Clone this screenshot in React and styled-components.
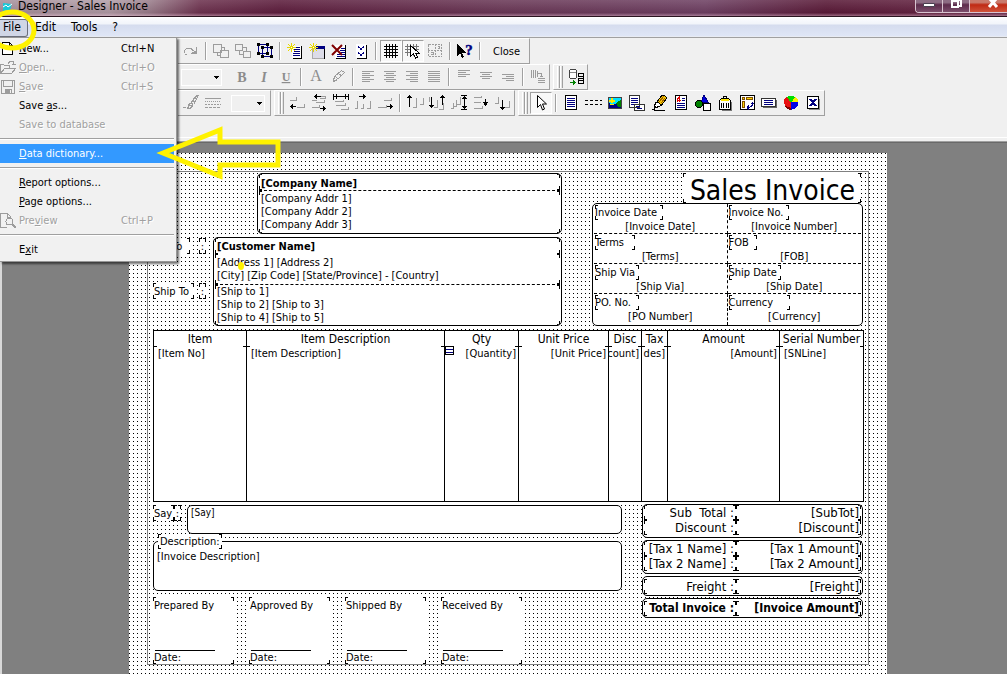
import React, { useState } from 'react';
import styled, { createGlobalStyle, css } from 'styled-components';

const GlobalStyle = createGlobalStyle`
  * { box-sizing: border-box; }
  body {
    margin: 0;
    background: #808080;
    color: #000;
    font: 11px/13px 'DejaVu Sans Condensed', 'DejaVu Sans', Tahoma, sans-serif;
  }
`;

/* ---------- window ---------- */

const Window = styled.div`
  position: relative;
  display: flex;
  flex-direction: column;
  height: 100vh;
  overflow: hidden;
`;

const TitleBar = styled.header`
  display: flex;
  align-items: flex-start;
  justify-content: space-between;
  height: 17px;
  flex: none;
  padding-left: 3px;
  border-bottom: 1px solid #2a1420;
  background:
    linear-gradient(to bottom, rgba(255, 255, 255, 0.12), rgba(40, 0, 20, 0.1) 80%, rgba(220, 180, 200, 0.5)),
    linear-gradient(to right, #a8929d 0, #b3a0a9 110px, #9b7f8c 150px, #6e3450 200px, #5e1f3e 280px, #6b3a58 50%, #6f4264 70%, #5a1b38 82%, #6a2a48 100%);
`;

const TitleText = styled.h1`
  display: flex;
  align-items: center;
  gap: 4px;
  margin: 0;
  height: 13px;
  font-size: 12px;
  font-weight: normal;
  white-space: pre;
`;

const WindowButtons = styled.div`
  display: flex;
  height: 13px;
  border: 1px solid #d8c4d0;
  border-top: 0;
  border-right: 0;
  border-radius: 0 0 0 4px;
  overflow: hidden;
`;

const WindowButton = styled.button`
  display: flex;
  align-items: flex-start;
  justify-content: center;
  width: ${props => (props.$close ? 37 : 27)}px;
  padding: 0;
  padding-left: ${props => (props.$close ? 9 : 0)}px;
  border: 0;
  border-right: ${props => (props.$close ? 0 : 1)}px solid #d8c4d0;
  background: ${props => (props.$close
    ? 'linear-gradient(#c97a6c 0 20%, #c02a14 40%, #d0543c)'
    : 'linear-gradient(#8d6d84 0 20%, #5d2c4c 40%, #7c4f6c)')};
`;

const MenuBar = styled.nav`
  display: flex;
  align-items: center;
  flex: none;
  height: 21px;
  border-top: 1px solid #fff;
  border-bottom: 1px solid #a0a0a0;
  background: linear-gradient(#fbfcfe 0, #f1f4fa 6px, #d5dcee 7px, #dfe6f6 18px, #f0f0f0 19px);
`;

const MenuTitle = styled.button`
  height: 18px;
  padding: ${props => (props.$open ? '0 6px 0 3px' : '0 7px')};
  border: 1px solid ${props => (props.$open ? '#6b6f7c' : 'transparent')};
  border-left: 0;
  border-radius: 0 3px 3px 0;
  background: ${props => (props.$open ? '#d0d6e6' : 'transparent')};
  font: inherit;
  font-size: 12px;
`;

const Popup = styled.div`
  position: absolute;
  top: 37px;
  left: 0;
  z-index: 2;
  width: 177px;
  padding: 1px 2px 2px 0;
  border: 1px solid #979797;
  border-left: 0;
  background: #f1f1f1;
  box-shadow: 2px 2px 2px rgba(0, 0, 0, 0.55);
`;

const MenuItem = styled.button`
  display: grid;
  grid-template-columns: 19px 1fr 53px;
  align-items: center;
  width: 100%;
  height: 19px;
  padding: 0;
  border: 0;
  background: ${props => (props.$active ? '#3399ff' : 'transparent')};
  color: ${props => (props.$active ? '#fff' : '#000')};
  font: inherit;
  text-align: left;
  white-space: nowrap;

  &:disabled {
    color: #a0a0a0;
    text-shadow: 1px 1px #fff;
  }

  u { text-underline-offset: 1px; }
`;

const MenuRule = styled.hr`
  margin: 4px 0;
  border: 0;
  border-top: 1px solid #a0a0a0;
  border-bottom: 1px solid #fff;
`;

/* ---------- toolbars ---------- */

const Dock = styled.div`
  flex: none;
  height: 105px;
  padding-left: 178px;
  border-bottom: 1px solid #696969;
  background: linear-gradient(#f0f0f0 0 99px, #fff 99px 100px, #f0f0f0 100px 103px, #a0a0a0 103px);
`;

const DockRow = styled.div`
  display: flex;
  gap: ${props => props.$gap || 0}px;
`;

const Bar = styled.div`
  display: flex;
  align-items: center;
  height: 26px;
  padding: 0 0 0 2px;
  border-top: 1px solid #fff;
  border-right: 1px solid #a0a0a0;
  border-bottom: 1px solid #a0a0a0;
  ${props => props.$grip && css`
    padding-left: 0;
    border-left: 1px solid #fff;
    &::before {
      content: '';
      width: 7px;
      height: 22px;
      margin: 0 1px 0 3px;
      background: linear-gradient(to right, #fff 0 1px, #e4e4e4 1px 2px, #a0a0a0 2px 3px, #fff 3px 4px, #e4e4e4 4px 5px, #a0a0a0 5px 6px, transparent 6px);
    }
  `}
`;

const ToolButton = styled.button`
  display: flex;
  align-items: center;
  justify-content: center;
  width: ${props => (props.$wide ? 45 : 22)}px;
  height: 22px;
  padding: 0;
  border: 1px solid transparent;
  background: none;
  font: 11px 'DejaVu Sans Condensed', Tahoma, sans-serif;
  ${props => props.$pressed && css`
    border-color: #a0a0a0 #fff #fff #a0a0a0;
    background: #f8f8f8;
  `}
`;

const Divider = styled.span`
  width: 8px;
  height: 18px;
  background: linear-gradient(to right, transparent 3px, #a0a0a0 3px 4px, #fff 4px 5px, transparent 5px);
`;

const Combo = styled.select`
  appearance: none;
  width: ${props => props.$width}px;
  height: 17px;
  margin: ${props => props.$margin};
  border: 1px solid #fff;
  border-radius: 0;
  background:
    linear-gradient(#000, #000) right 2px top 6px / 5px 1px no-repeat,
    linear-gradient(#000, #000) right 3px top 7px / 3px 1px no-repeat,
    linear-gradient(#000, #000) right 4px top 8px / 1px 1px no-repeat,
    #f0f0f0;
`;

const Glyph = styled.svg`
  display: block;
  fill: none;
  shape-rendering: crispEdges;
`;

const GREY = '#9c9c9c';
const NAVY = '#000080';

function Icon({ children, color = GREY }) {
  return (
    <Glyph width={18} height={18} viewBox="0 0 18 18" stroke={color} aria-hidden="true">
      {children}
    </Glyph>
  );
}

// horizontal strokes given as [x, y, length]
const rows = list => list.map(([x, y, w]) => `M${x} ${y + 0.5}h${w}`).join('');

const lines = list => <Icon><path d={rows(list)} /></Icon>;

const letter = (ch, extra) => (
  <Icon>
    <text x="9" y="14" textAnchor="middle" stroke="none" fill="#8c8c8c" fontFamily="Liberation Serif, serif" fontWeight="bold" fontSize="14" {...extra}>{ch}</text>
  </Icon>
);

const pageShape = <path d="M3.500 1.500h11v14h-11z" fill="#fff" stroke="#000" />;

const sparkle = (
  <>
    <path d="M5.500 1v9M1 5.500h9M2 2l7 7M9 2l-7 7" stroke="#e8d800" />
    <path d="M5 5h1v1h-1z" fill="#fff" stroke="none" />
  </>
);

const icons = {
  redo: <Icon><path d="M2.500 11v-2l2-3h4l3 3M14.500 5v6h-6M12 9.500h2M10 10.500h4M3 12.500h2" /></Icon>,
  front: <Icon><path d="M1.500 2.500h8v8h-8zM8.500 8.500h8v7h-8zM10 5.500h2.500v3M5.500 11v2.500h3" /></Icon>,
  back: <Icon><path d="M1.500 2.500h7v6h-7zM9.500 9.500h7v6h-7zM9 5.500h3.500v4M5.500 9v3.500h4" /></Icon>,
  group: (
    <Icon color={NAVY}>
      <path d="M2.500 2.500h9v9h-9zM6.500 5.500h9v9h-9z" />
      <path d="M1 1h3v3h-3zM10 1h3v3h-3zM1 10h3v3h-3zM5 4h3v3h-3zM14 4h3v3h-3zM5 13h3v3h-3zM14 13h3v3h-3zM10 10h3v3h-3z" fill="#000" stroke="none" />
    </Icon>
  ),
  newBand: (
    <Icon color={NAVY}>
      <path d="M6 4h9v12h-9z" fill="#fff" stroke="none" />
      <path d="M15.500 4v12.500h-9" stroke="#000" />
      <path d={rows([[8, 5, 6], [8, 7, 6], [8, 9, 6], [7, 11, 7], [7, 13, 7]])} />
      {sparkle}
    </Icon>
  ),
  newPage: (
    <Icon color="#000">
      <path d="M4.500 5.500h12v11h-12z" fill="#dcdce8" stroke="#aaa" />
      <path d="M16.500 5v12" />
      <path d="M8 4h9v3h-9z" fill={NAVY} stroke="none" />
      {sparkle}
    </Icon>
  ),
  remove: (
    <Icon color={NAVY}>
      <path d="M5 3h10v13h-10z" fill="#fff" stroke="none" />
      <path d="M15.500 3v13.500h-10" stroke="#000" />
      <path d={rows([[11, 6, 4], [10, 8, 5], [11, 10, 4], [7, 12, 8], [7, 14, 8]])} />
      <path d="M2 3l10 10M12 3l-10 10" stroke="#800000" strokeWidth="2" shapeRendering="auto" />
    </Icon>
  ),
  order: (
    <Icon color={NAVY}>
      <path d="M4 2h10v14h-10z" fill="#fff" stroke="none" />
      <path d="M14.500 3v13.500h-10" stroke="#000" />
      <path d="M6 4.500h1M7 5.500h1M8 6.500h2M10 5.500h1M11 4.500h1M6 10.500h1M7 11.500h1M8 12.500h2M10 11.500h1M11 10.500h1" />
      <path d="M6 5.500h1M11 5.500h1M8 7.500h2M6 11.500h1M11 11.500h1M8 13.500h2" />
    </Icon>
  ),
  grid: <Icon color="#000"><path d="M2 4.500h14M2 7.500h14M2 10.500h14M2 13.500h14M4.500 2v14M7.500 2v14M10.500 2v14M13.500 2v14" /></Icon>,
  snap: (
    <Icon color="#777">
      <path d="M1 4.500h14M1 7.500h14M1 10.500h14M3.500 2v12M6.500 2v12M9.500 2v12M12.500 2v12" />
      <path d="M6.500 3.500v11l3-2.500 2 4 2-1-2-4h3.500z" fill="#fff" stroke="#000" />
    </Icon>
  ),
  guides: (
    <Icon>
      <path d="M2.500 2.500h13v12h-13zM9.500 2v13M2 8.500h14" strokeDasharray="2 1" />
      <path d="M4.500 10.500h3v2h-3M11.500 4.500h2v2h-2" />
    </Icon>
  ),
  help: (
    <Icon color="#000">
      <path d="M1 2v12l3-3 2 5 2-1-2-4h4z" fill="#000" stroke="none" />
      <text x="13" y="13" textAnchor="middle" stroke={NAVY} strokeWidth="0.500" fill={NAVY} fontFamily="Liberation Serif, serif" fontWeight="bold" fontSize="15">?</text>
    </Icon>
  ),
  bold: letter('B'),
  italic: letter('I', { fontStyle: 'italic' }),
  underline: letter('U', { textDecoration: 'underline', y: 13, fontSize: 12 }),
  fontColor: letter('A', { y: 13, fontSize: 16, fontWeight: 'normal' }),
  marker: <Icon><path d="M4.500 12.500l1-4 7-6 3 2-7 7-4 2zM6 8l3 3M10 6l3 2" /></Icon>,
  left: lines([[3, 3, 12], [3, 5, 8], [3, 7, 12], [3, 9, 8], [3, 11, 12], [3, 13, 8]]),
  center: lines([[3, 3, 12], [5, 5, 8], [3, 7, 12], [5, 9, 8], [3, 11, 12], [5, 13, 8]]),
  right: lines([[3, 3, 12], [7, 5, 8], [3, 7, 12], [7, 9, 8], [3, 11, 12], [7, 13, 8]]),
  justify: lines([[3, 3, 12], [3, 5, 12], [3, 7, 12], [3, 9, 12], [3, 11, 12], [3, 13, 12]]),
  top: lines([[3, 2, 12], [3, 4, 8], [3, 6, 12], [3, 8, 8]]),
  middle: lines([[3, 4, 12], [5, 6, 8], [3, 8, 12], [5, 10, 8]]),
  bottom: lines([[3, 6, 12], [7, 8, 8], [3, 10, 12], [7, 12, 8]]),
  rotate: <Icon><path d="M2.500 2v8M4.500 2v8M6.500 2v8M8.500 3v6M9 5.500h3v3M9 10.500h7M9 12.500h7M9 14.500h7M11 8.500h3" /></Icon>,
  brush: <Icon><path d="M1 13.500h3M5.500 14.500l2-5h3v3l-3 2zM9 9l5-7h2l-4 8M7 11.500h3M10 7.500h3M12 4.500h2" strokeWidth="1.300" /></Icon>,
  frames: <Icon><path d="M1 4.500h16" /><path d="M1 7.500h16" strokeDasharray="1 1" /><path d="M1 10.500h16" strokeDasharray="2 1" /><path d="M1 13.500h16" strokeDasharray="3 1" /></Icon>,
  alignLeft: <Icon><path d="M2 6.500h6v-4M9 13.500h7v-4" /><path d="M2 12.500h6M4.500 10v5M3.500 11v3" stroke="#000" /></Icon>,
  alignMid: <Icon><path d="M2 6.500h5M11 2.500h4v2h-5M6 8.500h8v-3M2 13.500h7v-3" /><path d="M4 2.500h7M6.500 0v5M5.500 1v3M10 14.500h6M13.500 12v5M14.500 13v3" stroke="#000" /></Icon>,
  alignWide: <Icon><path d="M3 7.500h8v-2M4 11.500h9v-3M9 15.500h7v-3" /><path d="M1.500 0v6M16.500 0v6M2 2.500h14M4.500 0v5M13.500 0v5" stroke="#000" /></Icon>,
  spaceH: <Icon><path d="M1 14.500h2.500v-8M7 14.500h2.500v-5M13 14.500h3.500v-8" /><path d="M5 2.500h7M9.500 0v5M10.500 1v3" stroke="#000" /></Icon>,
  alignRight: <Icon><path d="M8 6.500h7v-3M2 13.500h8v-3" /><path d="M11 12.500h6M14.500 10v5M15.500 11v3" stroke="#000" /></Icon>,
  alignTop: <Icon><path d="M7 13.500h3.500v-10M14 10.500h3v-7" /><path d="M3.500 1v12M1 3.500h5M2 2.500h3" stroke="#000" /></Icon>,
  alignVMid: <Icon><path d="M6 13.500h3.500v-8M11 15.500h4v-7M1 3v5" /><path d="M3.500 3v11M1 11.500h5M2 12.500h3M14.500 1v10M12 3.500h5M13 2.500h3" stroke="#000" /></Icon>,
  alignTall: <Icon><path d="M1 14.500h2.500v-6M4 12.500h2.500v-7M7 10.500h3v-8" /><path d="M11 1.500h6M11 15.500h6M14.500 2v13M12 4.500h5M13 3.500h3M12 12.500h5M13 13.500h3" stroke="#000" /></Icon>,
  spaceV: <Icon><path d="M2 3.500h7v-2M2 8.500h7M2 14.500h8v-3" /><path d="M13.500 5v7M11 8.500h5M12 9.500h3M12 10.500h3" stroke="#000" /></Icon>,
  alignBottom: <Icon><path d="M1 9.500h3.500v-7M11 13.500h4v-7" /><path d="M8.500 6v10M6 13.500h5M7 14.500h3" stroke="#000" /></Icon>,
  fields: (
    <Icon color="#000">
      <path d="M2.500 2.500l1-1h5l1 1v7l-1 1h-5l-1-1z" fill="#fff" stroke="#444" />
      <path d="M3 4.500h6" stroke="#888" />
      <path d="M11 5.500h6M11 8.500h6M11 10.500h6M11 12.500h6M11 15.500h6M16.500 5v11M11.500 5v4M11.500 10v2M11.500 13v3" />
      <path d="M3 14.500h6M6.500 12v5M7.500 13v3" stroke="#008000" />
    </Icon>
  ),
  pointer: <Icon><path d="M5.500 1.500v12l3-3 2 5.500 2-1-2-5h4z" fill="#fff" stroke="#000" shapeRendering="auto" /></Icon>,
  memo: <Icon color={NAVY}>{pageShape}<path d={rows([[5, 4, 8], [5, 6, 8], [5, 8, 8], [5, 10, 8], [5, 12, 8]])} /></Icon>,
  band: <Icon color="#000"><path d="M1 6.500h17M1 10.500h17" strokeDasharray="3 2" /></Icon>,
  picture: (
    <Icon color="#444">
      <path d="M3 4h12v10h-12z" fill="#00e4ff" stroke="none" />
      <path d="M3 9l4 2 4-2 4-2v7h-12z" fill={NAVY} stroke="none" />
      <path d="M10 9l5-3v7h-3z" fill="#008000" stroke="none" />
      <path d="M5 4h2v2h2v2h-2v1h-2v-1h-2v-2h2zM4 10h4v1h-4z" fill="#ffe800" stroke="none" />
      <path d="M2.500 3.500h13v11h-13z" />
    </Icon>
  ),
  subreport: (
    <Icon color={NAVY}>
      <path d="M1.500 1.500h10v12h-10zM6.500 10.500h10v6h-10z" fill="#fff" stroke="#333" />
      <path d={rows([[3, 4, 7], [3, 6, 7], [3, 8, 7], [3, 10, 3], [8, 12, 4], [9, 14, 5]])} />
    </Icon>
  ),
  pen: (
    <Icon color="#000">
      <path d="M7 8l5-7h2l2 2v2l-5 7z" fill="#f8c800" />
      <path d="M4 13l2-5h2l2 2v2l-5 2z" fill="#fff" />
      <path d="M2 15.500h2l2-3M4 16.500h11" />
      <path d="M9 8l5-6M11 9l4-5" stroke="#a06000" />
    </Icon>
  ),
  rich: (
    <Icon color={NAVY}>
      {pageShape}
      <path d={rows([[10, 4, 3], [10, 6, 3], [5, 9, 8], [5, 11, 8], [5, 13, 8]])} />
      <path d="M5.500 8v-3l2-2v5M5 6.500h4" stroke="#e00000" strokeWidth="1.300" />
    </Icon>
  ),
  shape: (
    <Icon color="#000">
      <path d="M10 1l4 7h-7z" fill="#0000e0" stroke={NAVY} />
      <circle cx="5" cy="10" r="3.500" fill="#008000" />
      <path d="M9.500 9.500h7v7h-7z" fill="#fff" />
    </Icon>
  ),
  barcode: (
    <Icon color="#000">
      <path d="M15.500 8v8.500h-10" stroke="#777" />
      <path d="M3.500 6.500l2-2h7l2 2v9h-11z" fill="#fff" />
      <path d="M5 5h8v2h-8z" fill="#ffe800" stroke="none" />
      <path d="M7.500 4v-2h3v2M5.500 9v5M7.500 9v5M10.500 9v5M12.500 9v5" />
    </Icon>
  ),
  cross: (
    <Icon color={NAVY}>
      <path d="M2.500 1.500h14v14h-14z" fill="#fff" stroke="#000" />
      <path d="M4.500 3.500h2v2h-2zM8.500 3.500h6v2h-6zM4.500 7.500h2v6h-2z" fill="#ffd800" stroke="#805000" />
      <path d="M9 13.500h3M14.500 8v3l-2 2M13 9.500h3M9.500 12v3M10.500 11v5" />
    </Icon>
  ),
  check: (
    <Icon color={NAVY}>
      <path d="M3 6h14v8h-14z" fill="#666" stroke="none" />
      <path d="M1.500 4.500h14v8h-14z" fill="#fff" stroke="#333" />
      <path d={rows([[4, 6, 9], [4, 8, 9], [4, 10, 9]])} />
    </Icon>
  ),
  chart: (
    <Icon color="none">
      <path d="M9 9L5 3Q2 4 2 8q0 5 7 8z" fill="#e81010" />
      <path d="M9 9L5 3q4-3 8 0z" fill="#00e000" />
      <path d="M9 9l4-6q3 1 3 5z" fill="#fff000" />
      <path d="M9 8h7q1 6-7 8z" fill="#0000e8" />
      <path d="M3 12q2 4 6 4v-2z" fill="#800000" />
    </Icon>
  ),
  ole: (
    <Icon color={NAVY}>
      <path d="M5 5h11v11h-11z" fill="#888" stroke="none" />
      <path d="M3.500 2.500h11v12h-11z" fill="#fff" stroke="#000" />
      <path d="M6 5l6 7M12 5l-6 7" strokeWidth="2" />
      <path d="M5 5.500h3M10 5.500h3M5 11.500h3M10 11.500h3" />
    </Icon>
  ),
};

function Tools({ names, pressed = [] }) {
  return names.map((name, i) => (name === '|'
    ? <Divider key={i} />
    : <ToolButton key={name} title={name} $pressed={pressed.includes(name)}>{icons[name]}</ToolButton>));
}

/* ---------- report sheet ---------- */

const corner = (x, y) => `
  linear-gradient(#000, #000) ${x} ${y} / 3px 1px no-repeat,
  linear-gradient(#000, #000) ${x} ${y} / 1px 4px no-repeat`;

const corners = css`
  background:
    ${corner('left', 'top')},
    ${corner('right', 'top')},
    ${corner('left', 'bottom')},
    ${corner('right', 'bottom')},
    #fff;
`;

const Workspace = styled.main`
  display: flex;
  flex: 1;
  min-height: 0;
  overflow: hidden;
  padding: 10px 120px 0 127px;
  border-left: 2px solid #d8d8d8;
  background: #808080;
`;

const Sheet = styled.section`
  flex: 1;
  height: max-content;
  padding: 18px;
  background: conic-gradient(from 90deg at 3px 3px, #000 25%, #fff 0) 1px 1px / 4px 4px;
`;

const Margins = styled.div`
  padding: 1px 4px 0 5px;
  border: 1px solid #808080;
`;

const Columns = styled.div`
  display: grid;
  grid-template-columns: ${props => props.$columns};
  column-gap: ${props => props.$gap}px;
  align-items: start;
  padding-right: 1px;
`;

const Stack = styled.div`
  display: flex;
  flex-direction: column;
  gap: ${props => props.$gap || 0}px;
`;

const Box = styled.div`
  padding: 0 1px;
  border: 1px solid #000;
  border-radius: 5px;
  background: #fff;
  overflow: hidden;
`;

const CompanyBox = styled(Box)`
  margin-left: 104px;
`;

const Memo = styled.div`
  ${corners}
  padding: ${props => props.$pad || '1px 2px'};
  font-weight: ${props => (props.$bold ? 'bold' : 'normal')};
  font-size: ${props => props.$size || 11}px;
  line-height: ${props => props.$line || 13}px;
  text-align: ${props => props.$align || 'left'};
  min-height: ${props => props.$height || 0}px;
  width: ${props => (props.$width ? `${props.$width}px` : 'auto')};
  border-bottom: ${props => (props.$ruled ? '1px dashed #000' : 0)};
  white-space: pre-wrap;
`;

const Party = styled.div`
  display: grid;
  grid-template-columns: 46px 14px 1fr;
`;

const PartyLabels = styled.div`
  display: grid;
  align-content: start;
  row-gap: 29px;
  padding-top: 1px;
`;

const Heading = styled.h2`
  ${corners}
  align-self: flex-end;
  margin: 0 2px 0 0;
  padding: 3px 6px 0 7px;
  height: 30px;
  font-size: 28px;
  font-weight: normal;
  line-height: 29px;
  white-space: nowrap;
`;

const InfoGrid = styled(Box)`
  display: grid;
  grid-template-columns: 1fr 1fr;
`;

const InfoCell = styled.div`
  height: ${props => (props.$last ? 31 : 30)}px;
  padding: 1px 1px 0;
  border-bottom: ${props => (props.$last ? 0 : '1px dashed #000')};
  border-right: ${props => (props.$edge ? 0 : '1px dashed #000')};
  text-align: center;
`;

const ItemTable = styled.table`
  width: 100%;
  margin-top: 4px;
  border-collapse: collapse;
  table-layout: fixed;
  background: #fff;

  th, td {
    padding: 0;
    border: solid #000;
    border-width: 0 1px;
  }
  th {
    height: 15px;
    padding-top: 2px;
    border-top-width: 1px;
    font-size: 12px;
    font-weight: normal;
    line-height: 13px;
    white-space: nowrap;
  }
  td {
    height: 155px;
    border-bottom-width: 1px;
    vertical-align: top;
  }
`;

const CellText = styled.div`
  position: relative;
  display: flex;
  justify-content: ${props => (props.$right ? 'flex-end' : 'flex-start')};
  height: 20px;
  padding: ${props => (props.$right ? '1px 2px 0 0' : '1px 0 0 4px')};
  overflow: hidden;
  white-space: nowrap;
  background:
    linear-gradient(#000, #000) left top / 3px 1px no-repeat,
    linear-gradient(#000, #000) right top / 3px 1px no-repeat;
`;

const LinkMark = styled.i`
  position: absolute;
  left: 0;
  top: 0;
  width: 9px;
  height: 9px;
  border: 1px solid #000;
  background: linear-gradient(#fff 2px, #000080 2px 3px, #fff 3px 5px, #000080 5px 6px, #fff 6px);
`;

const FooterColumns = styled(Columns)`
  margin-top: 2px;
`;

const FooterLeft = styled(Stack)`
  padding-top: 1px;
`;

const SayRow = styled.div`
  display: flex;
  align-items: flex-start;
`;

const SayBox = styled(Box)`
  flex: 1;
  height: 29px;
  margin-left: 6px;
  padding: 0 3px;
  font-size: 10px;
`;

const Description = styled.fieldset`
  min-width: 0;
  height: 57px;
  margin: 0;
  padding: 0;
  border: 1px solid #000;
  border-radius: 5px;
  background: #fff;

  legend {
    ${corners}
    margin-left: 4px;
    padding: 1px 2px;
  }
  p { margin: 1px 3px; }
`;

const Signatures = styled.div`
  display: grid;
  grid-template-columns: repeat(4, 81px);
  column-gap: 15px;
  margin-top: 6px;
`;

const Signature = styled.div`
  ${corners}
  display: flex;
  flex-direction: column;
  justify-content: space-between;
  height: 67px;
  padding: 2px 1px 0;

  span:last-child {
    padding-top: 1px;
    background: linear-gradient(#000, #000) 1px 0 / 60px 1px no-repeat;
  }
`;

const TotalBox = styled(Box)`
  display: grid;
  grid-template-columns: 92px 1fr;
  padding: ${props => (props.$single ? 2 : 0)}px 1px ${props => (props.$single ? 1 : 2)}px;
`;

const Annotation = styled.svg`
  position: absolute;
  inset: 0;
  z-index: 3;
  width: 290px;
  height: 280px;
  pointer-events: none;
  fill: none;
  stroke: #fff200;
`;

/* ---------- data ---------- */

const menu = [
  { icon: 'new', label: ['', 'N', 'ew...'], keys: 'Ctrl+N' },
  { icon: 'open', label: ['', 'O', 'pen...'], keys: 'Ctrl+O', disabled: true },
  { icon: 'save', label: ['', 'S', 'ave'], keys: 'Ctrl+S', disabled: true },
  { label: ['Save ', 'a', 's...'] },
  { label: ['Save to database', '', ''], disabled: true },
  null,
  { label: ['', 'D', 'ata dictionary...'] },
  null,
  { label: ['', 'R', 'eport options...'] },
  { label: ['', 'P', 'age options...'] },
  { icon: 'preview', label: ['Pre', 'v', 'iew'], keys: 'Ctrl+P', disabled: true },
  null,
  { label: ['E', 'x', 'it'] },
];

const menuIcons = {
  new: <Icon color="#000"><path d="M2.500 2.500h7l3 3v9h-10zM9.500 2.500v3h3" fill="#fff" /></Icon>,
  open: <Icon><path d="M.500 14.500v-9h3l1 1h5v3M.500 14.500l4-5h11l-4 5zM8 4.500l2-2h3l1 3M12 5.500h4" /></Icon>,
  save: <Icon><path d="M1.500 2.500h13v13h-13zM3.500 3v5h9v-5M5 11h6v4h-6z" /><path d="M5 11h4v4h-4z" fill={GREY} /></Icon>,
  preview: <Icon><path d="M7 15.500h-6.500v-14h7l3 3v2M7.500 2v3h3" /><circle cx="9.500" cy="9.500" r="3.500" /><path d="M12 12l4 4" strokeWidth="2" /></Icon>,
};

const info = [
  ['Invoice Date', '[Invoice Date]', 68], ['Invoice No.', '[Invoice Number]', 60],
  ['Terms', '[Terms]', 40], ['FOB', '[FOB]', 28],
  ['Ship Via', '[Ship Via]', 44], ['Ship Date', '[Ship Date]', 52],
  ['PO. No.', '[PO Number]', 44], ['Currency', '[Currency]', 61],
];

const items = [
  { title: 'Item', field: '[Item No]', size: 93 },
  { title: 'Item Description', field: '[Item Description]', size: 198 },
  { title: 'Qty', field: '[Quantity]', size: 74, right: true, mark: true },
  { title: 'Unit Price', field: '[Unit Price]', size: 90, right: true },
  { title: 'Disc', field: 'count]', size: 33, right: true },
  { title: 'Tax', field: 'des]', size: 26, right: true },
  { title: 'Amount', field: '[Amount]', size: 112, right: true },
  { title: 'Serial Number', field: '[SNLine]', size: 84 },
];

const totals = [
  [['Sub  Total :', '[SubTot]'], ['Discount :', '[Discount]']],
  [['[Tax 1 Name] :', '[Tax 1 Amount]'], ['[Tax 2 Name] :', '[Tax 2 Amount]']],
  [['Freight :', '[Freight]']],
  [['Total Invoice :', '[Invoice Amount]']],
];

const signers = ['Prepared By', 'Approved By', 'Shipped By', 'Received By'];

/* ---------- parts ---------- */

function FileMenu() {
  const [active, setActive] = useState(6); // row under the cursor
  return (
    <Popup role="menu">
      {menu.map((item, i) => (item === null ? <MenuRule key={i} /> : (
        <MenuItem key={i} role="menuitem" disabled={item.disabled} $active={i === active} onMouseEnter={() => setActive(i)}>
          <span>{item.icon && menuIcons[item.icon]}</span>
          <span>{item.label[0]}<u>{item.label[1]}</u>{item.label[2]}</span>
          <span>{item.keys}</span>
        </MenuItem>
      )))}
    </Popup>
  );
}

function Toolbars() {
  return (
    <Dock>
      <DockRow>
        <Bar>
          <Tools
            names={['redo', '|', 'front', 'back', 'group', '|', 'newBand', 'newPage', 'remove', 'order', '|', 'grid', 'snap', 'guides', '|', 'help', '|']}
            pressed={['grid', 'snap']}
          />
          <ToolButton $wide>Close</ToolButton>
        </Bar>
      </DockRow>
      <DockRow $gap={3}>
        <Bar>
          <Combo aria-label="Font size" $width={41} $margin="0 9px 0 1px" />
          <Tools names={['bold', 'italic', 'underline', '|', 'fontColor', 'marker', '|', 'left', 'center', 'right', 'justify', '|', 'top', 'middle', 'bottom', '|', 'rotate']} />
        </Bar>
        <Bar $grip>
          <Tools names={['fields']} />
        </Bar>
      </DockRow>
      <DockRow $gap={3}>
        <Bar>
          <Tools names={['brush', 'frames']} />
          <Combo aria-label="Frame width" $width={34} $margin="0 5px 0 7px" />
        </Bar>
        <Bar $grip>
          <Tools names={['alignLeft', 'alignMid', 'alignWide', 'spaceH', 'alignRight', '|', 'alignTop', 'alignVMid', 'alignTall', 'spaceV', 'alignBottom']} />
        </Bar>
        <Bar $grip>
          <Tools
            names={['pointer', '|', 'memo', 'band', 'picture', 'subreport', 'pen', 'rich', 'shape', 'barcode', 'cross', 'check', 'chart', 'ole']}
            pressed={['pointer']}
          />
        </Bar>
      </DockRow>
    </Dock>
  );
}

function ReportHeader() {
  return (
    <Columns $columns="409fr 271fr" $gap={30}>
      <Stack $gap={3}>
        <CompanyBox>
          <Memo $bold $ruled $height={17} $pad="3px 2px 0">[Company Name]</Memo>
          <Memo $height={42}>{'[Company Addr 1]\n[Company Addr 2]\n[Company Addr 3]'}</Memo>
        </CompanyBox>
        <Party>
          <PartyLabels>
            <Memo $pad="2px 1px 1px" $width={37} $height={16}>Bill To</Memo>
            <Memo $pad="2px 1px 1px" $width={41} $height={16}>Ship To</Memo>
          </PartyLabels>
          <PartyLabels>
            <Memo $pad="2px 0 1px" $align="center" $width={7} $height={16}>:</Memo>
            <Memo $pad="2px 0 1px" $align="center" $width={7} $height={16}>:</Memo>
          </PartyLabels>
          <Box>
            <Memo $bold $height={16} $pad="2px 2px 1px">[Customer Name]</Memo>
            <Memo $ruled $height={31} $pad="2px">{'[Address 1] [Address 2]\n[City] [Zip Code] [State/Province] - [Country]'}</Memo>
            <Memo $height={40} $pad="0 2px 1px">{'[Ship to 1]\n[Ship to 2] [Ship to 3]\n[Ship to 4] [Ship to 5]'}</Memo>
          </Box>
        </Party>
      </Stack>
      <Stack>
        <Heading>Sales Invoice</Heading>
        <InfoGrid>
          {info.map(([label, value, width], i) => (
            <InfoCell key={label} $edge={i % 2 === 1} $last={i > 5}>
              <Memo $pad="1px 0" $width={width} $height={15}>{label}</Memo>
              {value}
            </InfoCell>
          ))}
        </InfoGrid>
      </Stack>
    </Columns>
  );
}

function Items() {
  return (
    <ItemTable>
      <colgroup>
        {items.map(item => <col key={item.title} style={{ width: `${item.size / 7.1}%` }} />)}
      </colgroup>
      <thead>
        <tr>{items.map(item => <th key={item.title} scope="col">{item.title}</th>)}</tr>
      </thead>
      <tbody>
        <tr>
          {items.map(item => (
            <td key={item.title}>
              <CellText $right={item.right}>{item.mark && <LinkMark />}{item.field}</CellText>
            </td>
          ))}
        </tr>
      </tbody>
    </ItemTable>
  );
}

function ReportFooter() {
  return (
    <FooterColumns $columns="469fr 221fr" $gap={20}>
      <FooterLeft>
        <SayRow>
          <Memo $pad="2px 1px 1px" $width={21} $height={16}>Say</Memo>
          <Memo $pad="2px 0 1px" $align="center" $width={7} $height={16}>:</Memo>
          <SayBox>[Say]</SayBox>
        </SayRow>
        <Description>
          <legend>Description:</legend>
          <p>[Invoice Description]</p>
        </Description>
        <Signatures>
          {signers.map(name => <Signature key={name}><span>{name}</span><span>Date:</span></Signature>)}
        </Signatures>
      </FooterLeft>
      <Stack $gap={2}>
        {totals.map((box, i) => {
          const last = i === totals.length - 1;
          return (
            <TotalBox key={i} $single={box.length === 1}>
              {box.map(([label, value]) => (
                <React.Fragment key={label}>
                  <Memo $size={last ? 12 : 13} $line={15} $align="right" $pad="0 2px 0 0" $bold={last}>{label}</Memo>
                  <Memo $size={last ? 12 : 13} $line={15} $align="right" $pad="0 2px 0 0" $bold={last}>{value}</Memo>
                </React.Fragment>
              ))}
            </TotalBox>
          );
        })}
      </Stack>
    </FooterColumns>
  );
}

export default function App() {
  return (
    <Window>
      <GlobalStyle />
      <TitleBar>
        <TitleText>
          <svg width="11" height="13" viewBox="0 0 11 13" aria-hidden="true">
            <path d="M0 3l9 1-2 6-7 1z" fill="#18c8d8" />
            <path d="M0 7l3-2 2 2 4-3" stroke="#fff" fill="none" />
          </svg>
          Designer - Sales Invoice
        </TitleText>
        <WindowButtons>
          <WindowButton aria-label="Minimize">
            <svg width="12" height="10"><path d="M.500 3.500h11v3h-11z" fill="#fff" stroke="#4a4050" /></svg>
          </WindowButton>
          <WindowButton aria-label="Restore">
            <svg width="12" height="10"><path d="M4 0h7v6h-2M2 1h6v6h-6z" fill="none" stroke="#fff" strokeWidth="2" /></svg>
          </WindowButton>
          <WindowButton $close aria-label="Close window">
            <svg width="14" height="10"><path d="M3 -2l8 9M11 -2l-8 9" fill="none" stroke="#fff" strokeWidth="3" /></svg>
          </WindowButton>
        </WindowButtons>
      </TitleBar>
      <MenuBar>
        <MenuTitle $open>File</MenuTitle>
        <MenuTitle>Edit</MenuTitle>
        <MenuTitle>Tools</MenuTitle>
        <MenuTitle>?</MenuTitle>
      </MenuBar>
      <Toolbars />
      <Workspace>
        <Sheet>
          <Margins>
            <ReportHeader />
            <Items />
            <ReportFooter />
          </Margins>
        </Sheet>
      </Workspace>
      <FileMenu />
      <Annotation viewBox="0 0 290 280" aria-hidden="true">
        <ellipse cx="12" cy="30" rx="22" ry="18" strokeWidth="5" />
        <path d="M163 153l57-23v12h58v23h-58v11z" strokeWidth="5" />
        <ellipse cx="241" cy="266" rx="3" ry="4" fill="#fff200" stroke="none" />
      </Annotation>
    </Window>
  );
}
